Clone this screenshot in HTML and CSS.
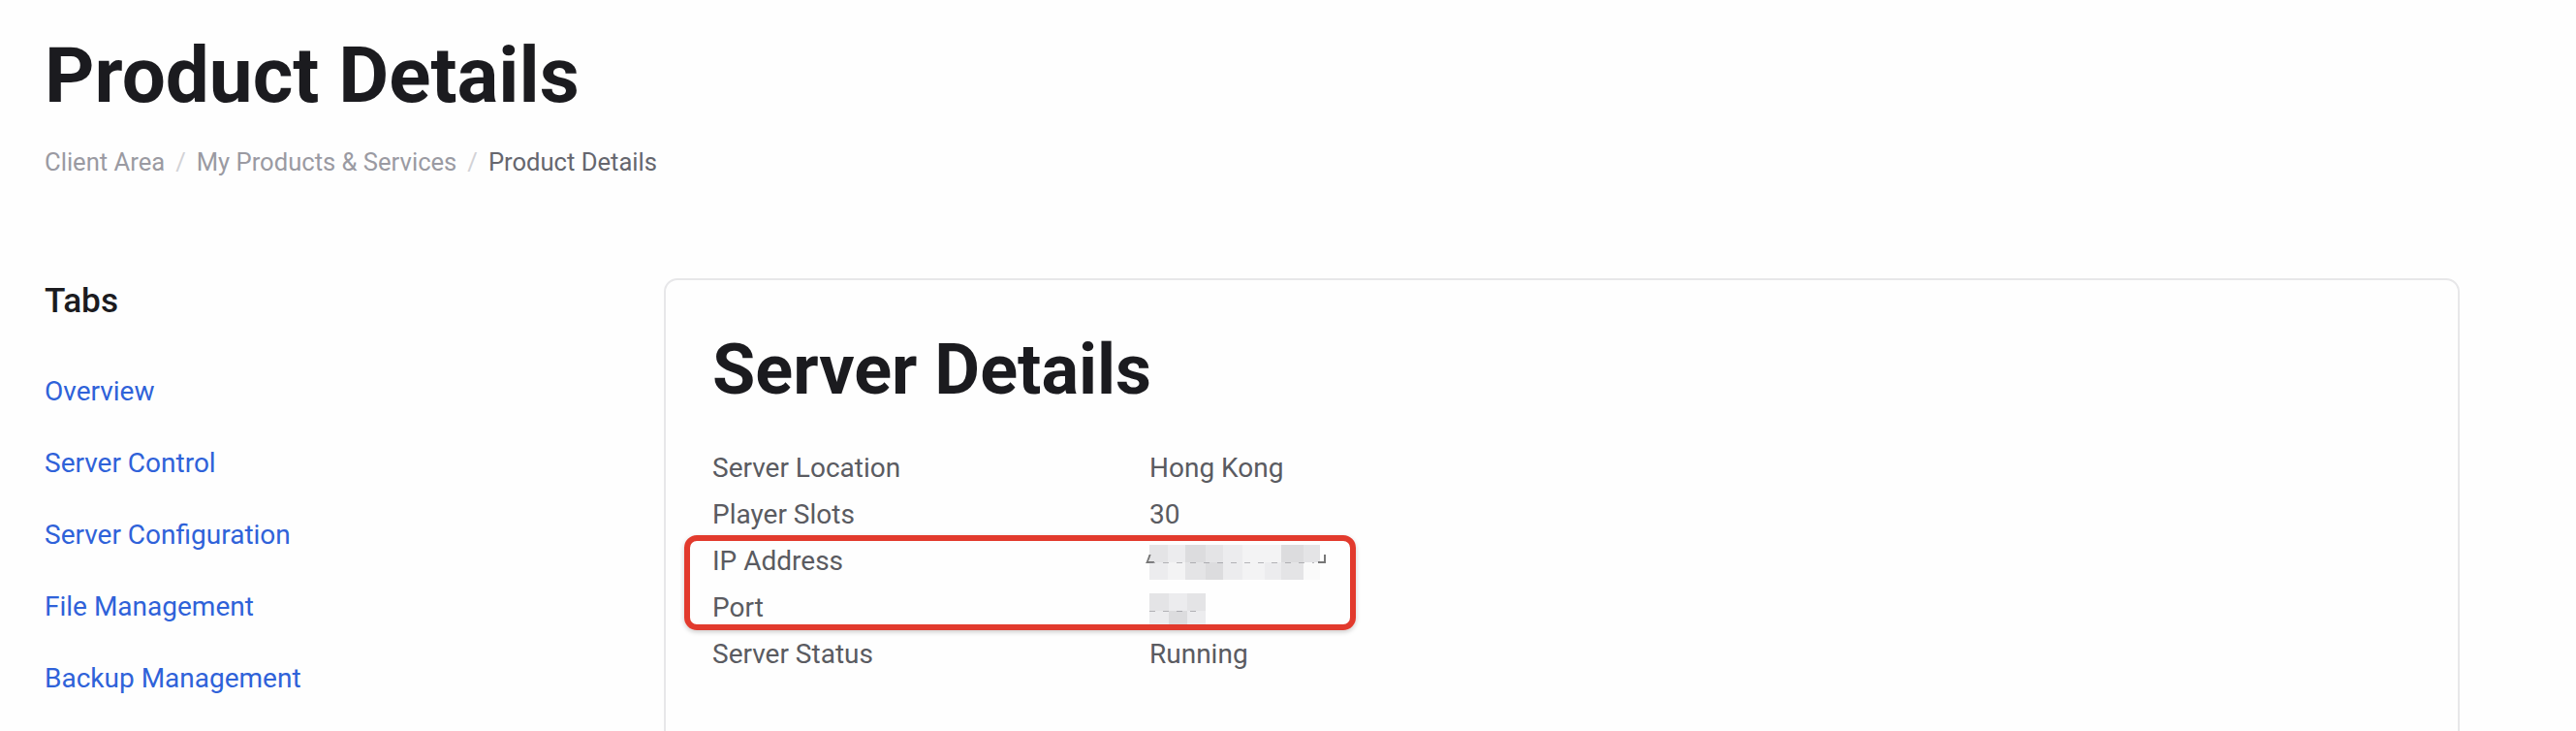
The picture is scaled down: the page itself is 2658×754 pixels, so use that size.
FILE: index.html
```html
<!DOCTYPE html>
<html lang="en">
<head>
<meta charset="utf-8">
<title>Product Details</title>
<link rel="stylesheet" href="styles.css">
</head>
<body>
<div class="page">
  <header class="page-header">
    <h1 class="page-title">Product Details</h1>
    <nav class="breadcrumb">
      <span class="crumb">Client Area</span>
      <span class="sep">/</span>
      <span class="crumb">My Products &amp; Services</span>
      <span class="sep">/</span>
      <span class="crumb active">Product Details</span>
    </nav>
  </header>

  <div class="layout">
    <aside class="sidebar">
      <h3 class="sidebar-title">Tabs</h3>
      <ul class="tab-list">
        <li><a class="tab-link" href="#">Overview</a></li>
        <li><a class="tab-link" href="#">Server Control</a></li>
        <li><a class="tab-link" href="#">Server Configuration</a></li>
        <li><a class="tab-link" href="#">File Management</a></li>
        <li><a class="tab-link" href="#">Backup Management</a></li>
      </ul>
    </aside>

    <section class="card">
      <h2 class="card-title">Server Details</h2>
      <div class="details">
        <div class="row"><span class="label">Server Location</span><span class="value">Hong Kong</span></div>
        <div class="row"><span class="label">Player Slots</span><span class="value">30</span></div>
        <div class="group">
          <div class="row">
            <span class="label">IP Address</span>
            <span class="value">
              <span class="mosaic ip">
                <span class="mrow">
                  <i class="m w19 s2"></i><i class="m w18 s3"></i><i class="m w21 s1"></i><i class="m w18 s2"></i><i class="m w20 s3"></i><i class="m w23 s4"></i><i class="m w17 s4"></i><i class="m w23 s1"></i><i class="m w17 s2"></i>
                </span>
                <span class="mrow">
                  <i class="m w19 s3"></i><i class="m w18 s4"></i><i class="m w21 s2"></i><i class="m w18 s1"></i><i class="m w20 s3"></i><i class="m w23 s4"></i><i class="m w17 s3"></i><i class="m w23 s2"></i><i class="m w17 s5"></i>
                </span>
                <span class="digit d-left"></span>
                <span class="digit d-right"></span>
                <span class="dash"></span>
              </span>
            </span>
          </div>
          <div class="row">
            <span class="label">Port</span>
            <span class="value">
              <span class="mosaic port">
                <span class="mrow">
                  <i class="m w20 s2"></i><i class="m w19 s3"></i><i class="m w19 s2"></i>
                </span>
                <span class="mrow">
                  <i class="m w20 s3"></i><i class="m w19 s1"></i><i class="m w19 s3"></i>
                </span>
                <span class="dash"></span>
              </span>
            </span>
          </div>
          <span class="annotation"></span>
        </div>
        <div class="row"><span class="label">Server Status</span><span class="value">Running</span></div>
      </div>
    </section>
  </div>
</div>
</body>
</html>
```

FILE: styles.css
```css
* {
  box-sizing: border-box;
}

html, body {
  margin: 0;
  padding: 0;
  background: #fefefe;
}

body {
  font-family: Roboto, "Liberation Sans", Arial, sans-serif;
  color: #1c1c20;
  overflow: hidden;
}

.page {
  padding: 30px 120px 0 46px;
}

.page-title {
  margin: 0;
  font-size: 80px;
  line-height: 96px;
  font-weight: 700;
  color: #1b1b1f;
  letter-spacing: 0;
}

.breadcrumb {
  margin-top: 22px;
  font-size: 25.6px;
  line-height: 38px;
  color: #9a9aa2;
  display: flex;
  align-items: baseline;
}

.sep {
  color: #d2d2d6;
  margin: 0 11px;
}

.crumb.active {
  color: #65666e;
}

.layout {
  margin-top: 101px;
  display: grid;
  grid-template-columns: 639px 1fr;
}

.sidebar {
  padding-top: 2px;
}

.sidebar-title {
  margin: 0;
  font-size: 35.2px;
  line-height: 42px;
  font-weight: 500;
  color: #1b1b1f;
}

.tab-list {
  list-style: none;
  margin: 52px 0 0;
  padding: 0;
  display: flex;
  flex-direction: column;
  gap: 32px;
}

.tab-link {
  font-size: 28px;
  line-height: 42px;
  color: #2f62d9;
  text-decoration: none;
  display: block;
}

.card {
  border: 2px solid #e7e7e9;
  border-radius: 14px;
  background: #fefefe;
  padding: 50px 48px 0 48px;
  min-height: 520px;
}

.card-title {
  margin: 0;
  font-size: 72px;
  line-height: 86px;
  font-weight: 700;
  color: #1b1b1f;
  letter-spacing: 0;
}

.details {
  margin-top: 34px;
  display: flex;
  flex-direction: column;
}

.row {
  display: grid;
  grid-template-columns: 451px 1fr;
  height: 48px;
  align-items: center;
  font-size: 28px;
  line-height: 48px;
  color: #5a5b61;
}

.value {
  display: flex;
  align-items: center;
  height: 48px;
}

.group {
  position: relative;
}

.annotation {
  position: absolute;
  left: -29px;
  top: -3px;
  width: 693px;
  height: 98px;
  border: 6px solid #e23a2d;
  border-radius: 13px;
  box-shadow: 0 2px 5px rgba(0, 0, 0, 0.2);
  pointer-events: none;
}

.mosaic {
  position: relative;
  display: flex;
  flex-direction: column;
  margin-top: 2px;
}

.mosaic.port {
  margin-top: 6px;
}

.mrow {
  display: flex;
  height: 18px;
}

.m {
  display: block;
  height: 18px;
}

.w17 { width: 17px; }
.w18 { width: 18px; }
.w19 { width: 19px; }
.w20 { width: 20px; }
.w21 { width: 21px; }
.w23 { width: 23px; }

.s1 { background: #dcdcde; }
.s2 { background: #e4e4e6; }
.s3 { background: #ececee; }
.s4 { background: #f3f3f4; }
.s5 { background: #fafafa; }

.dash {
  position: absolute;
  left: 0;
  right: 6px;
  top: 18px;
  height: 1px;
  background: repeating-linear-gradient(90deg, #8a8a90 0 6px, transparent 6px 14px);
  opacity: 0.6;
}

.digit {
  position: absolute;
  top: 10px;
  width: 8px;
  height: 9px;
  border-bottom: 2px solid #777;
}

.d-left {
  left: -2px;
  border-left: 2px solid #777;
  transform: skewX(-20deg);
}

.d-right {
  right: -6px;
  border-right: 2px solid #777;
}
```
